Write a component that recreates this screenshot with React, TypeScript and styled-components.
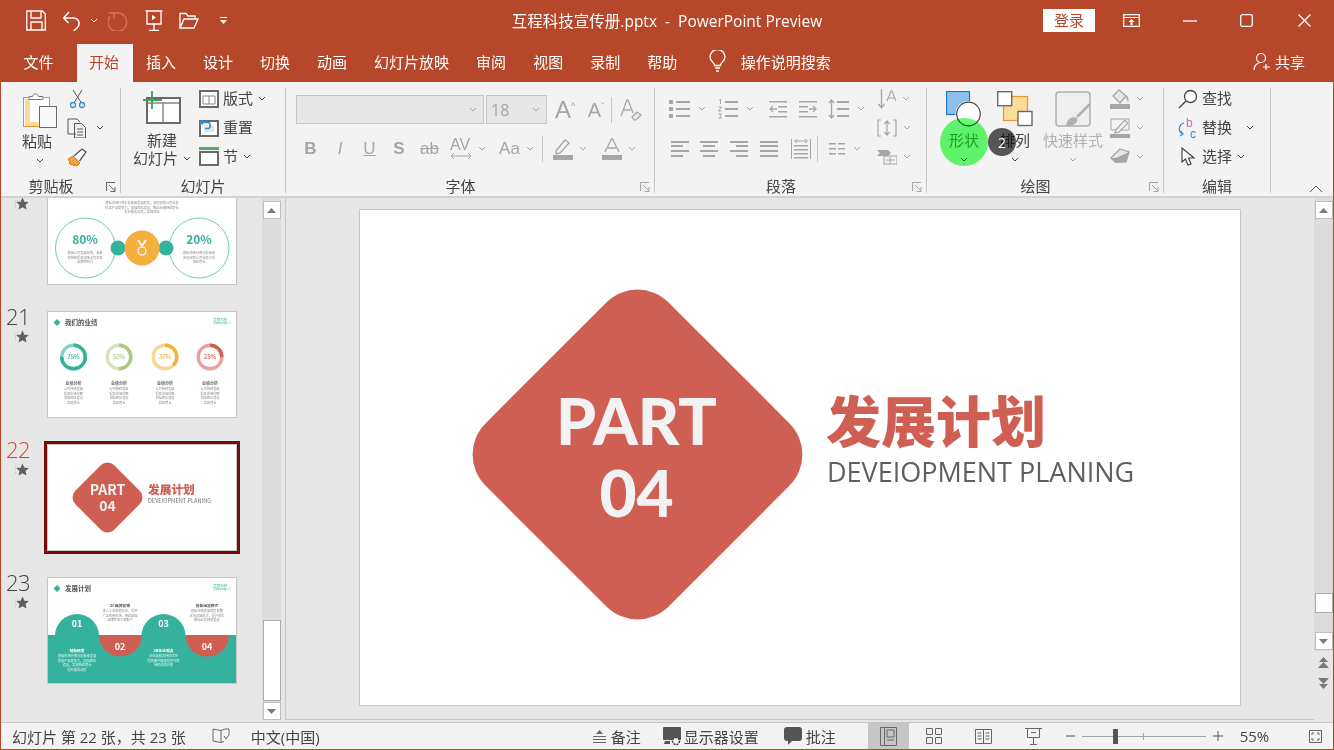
import React from 'react';
import styled, { createGlobalStyle } from 'styled-components';

const RED = '#b7472a';
const OFF = '#a6a6a6';
const INK = '#444444';
const FONT = '"Open Sans", "Noto Sans CJK SC", sans-serif';

const Global = createGlobalStyle`
  html, body { margin: 0; padding: 0; background: #e6e6e6; }
  * { box-sizing: border-box; }
  body { font-family: ${FONT}; }
`;

const Window = styled.div`
  position: relative;
  width: 1334px;
  height: 750px;
  overflow: hidden;
  display: flex;
  flex-direction: column;
  border: 1px solid ${RED};
  border-top: none;
  background: #e6e6e6;
`;

/* title bar */
const TitleBar = styled.header`
  height: 43px;
  flex: none;
  display: grid;
  grid-template-columns: 1fr auto 1fr;
  align-items: center;
  padding-bottom: 2px;
  background: ${RED};
  color: #fff;
`;
const Qat = styled.div`
  display: flex;
  align-items: center;
`;
const Slot = styled.span<{ $ml: number }>`
  display: flex;
  margin-left: ${p => p.$ml}px;
`;
const Title = styled.div`
  font-size: 15.5px;
  white-space: pre;
`;
const WinControls = styled.div`
  display: flex;
  align-items: center;
  justify-content: flex-end;
`;
const Login = styled.button`
  width: 52px;
  height: 23px;
  margin-right: 27px;
  padding: 0 0 3px;
  border: none;
  background: #fff;
  color: ${RED};
  font: 15px ${FONT};
`;
const WinBtn = styled.span<{ $w: number }>`
  display: flex;
  justify-content: center;
  width: ${p => p.$w}px;
`;

/* tabs */
const TabBar = styled.nav`
  height: 39px;
  flex: none;
  display: flex;
  align-items: stretch;
  background: ${RED};
  color: #fff;
  font-size: 15px;
`;
const Tab = styled.span<{ $active?: boolean; $first?: boolean }>`
  display: flex;
  align-items: center;
  padding: 0 13.5px 3px ${p => (p.$active ? 12.5 : 13.5)}px;
  margin-top: 1px;
  margin-left: ${p => (p.$first ? 9 : 0)}px;
  margin-right: ${p => (p.$first ? 9.5 : 0)}px;
  background: ${p => (p.$active ? '#f3f3f3' : 'transparent')};
  color: ${p => (p.$active ? RED : '#fff')};
`;
const Search = styled.span`
  display: flex;
  align-items: center;
  gap: 15px;
  margin-left: 18px;
  padding-bottom: 3px;
`;
const Share = styled.span`
  display: flex;
  align-items: center;
  gap: 4px;
  margin-left: auto;
  margin-right: 28px;
  padding-bottom: 3px;
`;

/* ribbon */
const Ribbon = styled.section`
  position: relative;
  height: 116px;
  flex: none;
  display: flex;
  padding-top: 3px;
  background: #f3f3f3;
  border-bottom: 2px solid #d2d2d2;
  color: ${INK};
  font-size: 15px;
`;
const Group = styled.div<{ $w: number }>`
  width: ${p => p.$w}px;
  flex: none;
  display: flex;
  flex-direction: column;
`;
const Body = styled.div<{ $pl?: number }>`
  height: 92px;
  display: flex;
  padding-left: ${p => p.$pl ?? 0}px;
`;
const GroupLabel = styled.div`
  height: 19px;
  display: flex;
  align-items: center;
  line-height: 19px;
`;
const GroupName = styled.span`
  flex: 1;
  text-align: center;
  white-space: nowrap;
`;
const Launcher = styled.span`
  width: 19px;
  flex: none;
  display: flex;
  justify-content: flex-end;
  padding-right: 4px;
`;
const Sep = styled.div`
  width: 1px;
  height: 105px;
  flex: none;
  margin-top: 3px;
  background: #c6c6c6;
`;
const Big = styled.div<{ $w: number; $off?: boolean }>`
  width: ${p => p.$w}px;
  flex: none;
  display: flex;
  flex-direction: column;
  align-items: center;
  padding-top: 6px;
  color: ${p => (p.$off ? '#b0b0b0' : INK)};
  line-height: 18px;
`;
const BigText = styled.span`
  margin-top: 4px;
  white-space: nowrap;
`;
const PasteText = styled(BigText)`
  margin-left: -6px;
`;
const ShapeText = styled(BigText)`
  color: #3f9f4c;
`;
const BigLine = styled.span`
  display: flex;
  align-items: center;
  gap: 5px;
  white-space: nowrap;
`;
const ChevWrap = styled.span`
  display: flex;
  margin-top: 8px;
`;
const Col = styled.div<{ $ml?: number }>`
  display: flex;
  flex-direction: column;
  margin-top: -1px;
  margin-left: ${p => p.$ml ?? 0}px;
`;
const Small = styled.div`
  height: 29px;
  display: flex;
  align-items: center;
  white-space: nowrap;
`;
const SmallIcon = styled.span`
  width: 20px;
  display: flex;
  justify-content: center;
  margin-right: 4px;
  flex: none;
`;
const SmallText = styled.span`
  margin-bottom: 3px;
`;
const SmallChev = styled.span<{ $ml: number }>`
  display: flex;
  margin-left: ${p => p.$ml}px;
`;
const ToolRows = styled.div<{ $pt: number; $gap: number }>`
  display: flex;
  flex-direction: column;
  padding-top: ${p => p.$pt}px;
  gap: ${p => p.$gap}px;
`;
const ToolRow = styled.div`
  height: 29px;
  display: flex;
  align-items: center;
`;
const Tool = styled.span<{ $w: number; $gap?: number }>`
  width: ${p => p.$w}px;
  flex: none;
  display: flex;
  align-items: center;
  justify-content: center;
  gap: ${p => p.$gap ?? 6}px;
`;
const Glyph = styled.span<{ $size?: number; $weight?: number; $italic?: boolean; $under?: boolean; $strike?: boolean }>`
  color: ${OFF};
  font-family: "Liberation Sans", sans-serif;
  font-size: ${p => p.$size ?? 17}px;
  font-weight: ${p => p.$weight ?? 400};
  font-style: ${p => (p.$italic ? 'italic' : 'normal')};
  text-decoration: ${p => (p.$under ? 'underline' : p.$strike ? 'line-through' : 'none')};
  line-height: 20px;
`;
const GlyphRaised = styled(Glyph)`
  display: inline-flex;
`;
const Mini = styled.i`
  font-style: normal;
  font-size: 9px;
  line-height: 12px;
`;
const Select = styled.span<{ $w: number }>`
  width: ${p => p.$w}px;
  height: 29px;
  flex: none;
  display: flex;
  align-items: center;
  justify-content: space-between;
  margin-right: 2px;
  padding: 0 6px 0 4px;
  border: 1px solid #c6c6c6;
  background: #e6e6e6;
  color: ${OFF};
  font-size: 16px;
`;
const VRule = styled.span<{ $h?: number }>`
  width: 1px;
  height: ${p => p.$h ?? 26}px;
  flex: none;
  background: #c6c6c6;
`;
const Collapse = styled.span`
  position: absolute;
  right: 10px;
  bottom: 3px;
  display: flex;
`;
const TouchMark = styled.span`
  position: absolute;
  left: 939px;
  top: 36px;
  width: 48px;
  height: 48px;
  border-radius: 50%;
  background: #62ff70;
  mix-blend-mode: multiply;
`;
const TouchBadge = styled.span`
  position: absolute;
  left: 987px;
  top: 46px;
  width: 28px;
  height: 28px;
  border-radius: 50%;
  background: #5a5a5a;
  mix-blend-mode: multiply;
`;
const TouchCount = styled.span`
  position: absolute;
  left: 987px;
  top: 46px;
  width: 28px;
  height: 28px;
  display: flex;
  align-items: center;
  justify-content: center;
  color: #fff;
  font-size: 14px;
`;

/* workspace */
const Workspace = styled.main`
  flex: 1;
  min-height: 0;
  display: flex;
  background: #e6e6e6;
`;
const ThumbPane = styled.aside`
  width: 261px;
  flex: none;
  overflow: hidden;
`;
const ThumbList = styled.div`
  margin-top: -20px;
`;
const ThumbRow = styled.div`
  height: 133px;
  display: flex;
`;
const ThumbMeta = styled.div<{ $active?: boolean }>`
  width: 46px;
  flex: none;
  display: flex;
  flex-direction: column;
  padding-left: 5px;
  margin-top: -10px;
  color: ${p => (p.$active ? '#d24726' : INK)};
  font-size: 22px;
  line-height: 30px;
  letter-spacing: -0.5px;
  font-family: "Open Sans", sans-serif;
  font-weight: 300;
`;
const StarMark = styled.span`
  display: flex;
  margin-left: 9px;
  margin-top: -1px;
`;
const Thumb = styled.div<{ $active?: boolean }>`
  width: 190px;
  height: 107px;
  flex: none;
  background: #fff;
  border: 1px solid #c6c6c6;
  box-shadow: ${p => (p.$active ? '0 0 0 3px #750b0b' : 'none')};
  overflow: hidden;
`;
const ThumbSvg = styled.svg`
  display: block;
  fill: none;
  font-family: "Noto Sans CJK SC", sans-serif;
`;
const ScrollBar = styled.div<{ $end?: boolean }>`
  width: 19px;
  flex: none;
  height: ${p => (p.$end ? '453px' : '522px')};
  display: flex;
  flex-direction: column;
  align-items: center;
  padding-top: 3px;
  background: #dcdcdc;
`;
const ArrowBtn = styled.span`
  width: 18px;
  height: 18px;
  flex: none;
  display: flex;
  align-items: center;
  justify-content: center;
  background: #fff;
  border: 1px solid #bdbdbd;
`;
const ScrollThumb = styled.span<{ $h: number; $mt: number; $mb: number }>`
  width: 18px;
  height: ${p => p.$h}px;
  flex: none;
  margin-top: ${p => p.$mt}px;
  margin-bottom: ${p => p.$mb}px;
  background: #fff;
  border: 1px solid #ababab;
`;
const Gutter = styled.div`
  width: 4px;
  flex: none;
`;
const Editor = styled.div`
  flex: 1;
  min-width: 0;
  display: flex;
  height: 522px;
  border-left: 1px solid #c6c6c6;
  border-bottom: 1px solid #c6c6c6;
  padding: 11px 0 0 73px;
`;
const Slide = styled.div`
  position: relative;
  width: 882px;
  height: 497px;
  background: #fff;
  border: 1px solid #c6c6c6;
`;
const Diamond = styled.div`
  position: absolute;
  left: 148px;
  top: 115px;
  width: 259px;
  height: 259px;
  background: #cf5f53;
  border-radius: 44px;
  transform: rotate(45deg);
`;
const DiamondText = styled.div`
  position: absolute;
  left: 147px;
  top: 117px;
  width: 259px;
  height: 259px;
  display: flex;
  flex-direction: column;
  align-items: center;
  justify-content: center;
  color: #f2f2f2;
  font-family: Lato, sans-serif;
  font-weight: 900;
  font-size: 64px;
  line-height: 72px;
`;
const Heading = styled.div`
  position: absolute;
  left: 466px;
  top: 169px;
  color: #cf5f53;
  font-family: "Noto Sans CJK SC", sans-serif;
  font-weight: 900;
  font-size: 55px;
  line-height: 78px;
  white-space: nowrap;
`;
const SubHeading = styled.div`
  position: absolute;
  left: 467px;
  top: 243px;
  color: #5f5f5f;
  font-size: 27px;
  line-height: 38px;
  white-space: nowrap;
`;
const SideRail = styled.div`
  width: 19px;
  flex: none;
  display: flex;
  flex-direction: column;
  align-items: center;
`;
const PageJump = styled.span<{ $mt: number }>`
  display: flex;
  margin-top: ${p => p.$mt}px;
`;

/* status bar */
const StatusBar = styled.footer`
  height: 27px;
  flex: none;
  display: flex;
  align-items: center;
  background: #f3f3f3;
  border-top: 1px solid #c6c6c6;
  color: ${INK};
  font-size: 15px;
  white-space: pre;
`;
const StatusItem = styled.span<{ $ml: number }>`
  display: flex;
  align-items: center;
  gap: 4px;
  margin-left: ${p => p.$ml}px;
`;
const SettingsText = styled.span`
  margin-left: -3px;
`;
const ViewBtn = styled.span<{ $active?: boolean; $w: number }>`
  width: ${p => p.$w}px;
  height: 26px;
  flex: none;
  display: flex;
  align-items: center;
  justify-content: center;
  background: ${p => (p.$active ? '#c6c6c6' : 'transparent')};
`;
const ZoomTrack = styled.span`
  position: relative;
  width: 124px;
  height: 1px;
  margin: 0 7px;
  background: #a6a6a6;
`;
const ZoomKnob = styled.span`
  position: absolute;
  left: 31px;
  top: -7px;
  width: 5px;
  height: 15px;
  background: #555;
`;
const ZoomTick = styled.span`
  position: absolute;
  left: 61px;
  top: -3px;
  width: 1px;
  height: 7px;
  background: #a6a6a6;
`;

const Ico = ({ w, h, children }: { w: number; h: number; children: React.ReactNode }) => (
  <svg width={w} height={h} viewBox={`0 0 ${w} ${h}`} fill='none' style={{ display: 'block' }}>{children}</svg>
);

const Chev = ({ off }: { off?: boolean }) => (
  <Ico w={8} h={5}><path d='M1 1l3 3 3-3' stroke={off ? OFF : INK} /></Ico>
);

const LaunchIcon = ({ off }: { off?: boolean }) => {
  const c = off ? OFF : '#666';
  return (
    <Ico w={10} h={10}>
      <path d='M.5 9V.5H9M3 3l5.5 5.5M9 5v4.5H4.5' stroke={c} />
    </Ico>
  );
};

const Bars = ({ w, ys, xs, ws, t = 2 }: { w: number; ys: number[]; xs?: number[]; ws?: number[]; t?: number }) => (
  <>
    {ys.map((y, i) => (
      <rect key={y} x={xs ? xs[i] : 0} y={y} width={ws ? ws[i] : w} height={t} fill={OFF} />
    ))}
  </>
);

const Bullets = () => (
  <Ico w={21} h={20}>
    <rect y='1' width='4' height='4' fill={OFF} /><rect y='8' width='4' height='4' fill={OFF} /><rect y='15' width='4' height='4' fill={OFF} />
    <Bars w={14} xs={[7, 7, 7]} ys={[2, 9, 16]} ws={[14, 14, 14]} />
  </Ico>
);
const Numbered = () => (
  <Ico w={20} h={20}>
    <path d='M1 1l1.5-1v5M.5 8h3l-3 4h3M.5 15h3l-1.5 2 1.5 2h-3' stroke={OFF} />
    <Bars w={13} xs={[7, 7, 7]} ys={[2, 9, 16]} ws={[13, 13, 13]} />
  </Ico>
);
const Indent = ({ flip }: { flip?: boolean }) => (
  <Ico w={18} h={18}>
    <g transform={flip ? 'matrix(-1 0 0 1 18 0)' : undefined}>
      <Bars w={18} ys={[1, 16]} t={1.5} />
      <rect x='9' y='6' width='9' height='1.5' fill={OFF} /><rect x='9' y='11' width='9' height='1.5' fill={OFF} />
      <path d='M8 9H1M4 6L1 9l3 3' stroke={OFF} strokeWidth='1.3' />
    </g>
  </Ico>
);
const LineSpacing = () => (
  <Ico w={21} h={20}>
    <path d='M3.5 1v18M1 4l2.5-3L6 4M1 16l2.5 3L6 16' stroke={OFF} strokeWidth='1.3' />
    <Bars w={12} xs={[9, 9, 9]} ys={[2, 9, 16]} ws={[12, 12, 12]} />
  </Ico>
);
const AlignIcon = ({ xs, ws }: { xs: number[]; ws: number[] }) => (
  <Ico w={18} h={17}><Bars w={18} ys={[1, 5, 10, 15]} xs={xs} ws={ws} /></Ico>
);

const Star = () => (
  <Ico w={14} h={13}>
    <path d='M7.5.5l1.9 4.2 4.4.4-3.3 3 1 4.5-4-2.4-4 2.4 1-4.5-3.3-3 4.4-.4z' fill='#5f5f5f' />
    <path d='M0 4h3M0 7h2M0 10h2' stroke='#b5b5b5' strokeDasharray='1 1' />
  </Ico>
);

const Up = () => <Ico w={9} h={5}><path d='M4.5 0L9 5H0z' fill='#7a7a7a' /></Ico>;
const Down = () => <Ico w={9} h={5}><path d='M0 0h9L4.5 5z' fill='#7a7a7a' /></Ico>;

const T = ({ x, y, s = 3.2, c = '#8a8a8a', w = 400, a = 'start', children }: {
  x: number; y: number; s?: number; c?: string; w?: number; a?: 'start' | 'middle'; children: React.ReactNode;
}) => <text x={x} y={y} fontSize={s} fill={c} fontWeight={w} textAnchor={a}>{children}</text>;

const Donut = ({ x, c, light, pct, label }: { x: number; c: string; light: string; pct: number; label: string }) => {
  const r = 11.8;
  const len = 2 * Math.PI * r;
  return (
    <g>
      <circle cx={x} cy='45' r={r} stroke={light} strokeWidth='3.4' />
      <circle cx={x} cy='45' r={r} stroke={c} strokeWidth='3.4' strokeDasharray={`${(len * pct) / 100} ${len}`} transform={`rotate(-90 ${x} 45)`} />
      <T x={x} y={47} s={6} c={c} w={500} a='middle'>{label}</T>
    </g>
  );
};

const Thumb20 = () => (
  <ThumbSvg width='188' height='105' viewBox='0 0 188 105'>
    <T x={94} y={25} a='middle'>根据市场行情分析未来发展趋势，合理规划公司业务</T>
    <T x={94} y={29.5} a='middle'>提高产品竞争力，加强团队建设，推动业绩持续增长</T>
    <T x={94} y={34} a='middle'>提升服务品质，实现目标</T>
    <circle cx='37.5' cy='69' r='30' stroke='#35b29c' strokeWidth='.7' />
    <circle cx='151' cy='69' r='30' stroke='#35b29c' strokeWidth='.7' />
    <circle cx='70' cy='69' r='7.5' fill='#35b29c' />
    <circle cx='118' cy='69' r='7.5' fill='#35b29c' />
    <circle cx='94' cy='69' r='17.5' fill='#f4b03e' />
    <circle cx='94' cy='72' r='4' stroke='#fff' strokeWidth='1.2' />
    <path d='M90 61l4 6 4-6' stroke='#fff' strokeWidth='1.6' />
    <T x={37} y={65} s={12} c='#35b29c' w={700} a='middle'>80%</T>
    <T x={151} y={65} s={12} c='#35b29c' w={700} a='middle'>20%</T>
    <T x={37} y={75} a='middle'>根据公司发展规划，未来</T>
    <T x={37} y={79.5} a='middle'>将持续提高市场占有率和</T>
    <T x={37} y={84} a='middle'>品牌影响力</T>
    <T x={151} y={75} a='middle'>根据市场行情分析未来</T>
    <T x={151} y={79.5} a='middle'>合理规划公司业务方向</T>
    <T x={151} y={84} a='middle'>持续增长</T>
  </ThumbSvg>
);

const Thumb21 = () => (
  <ThumbSvg width='188' height='105' viewBox='0 0 188 105'>
    <path d='M9 7l3.5 3.5L9 14l-3.5-3.5z' fill='#35b29c' />
    <T x={17} y={13} s={6.5} c='#555' w={700}>我们的业绩</T>
    <T x={165} y={9} s={3.6} c='#35b29c'>互程科技</T>
    <T x={165} y={12} s={2.2} c='#35b29c'>互程科技有限公司</T>
    {[
      { x: 25.5, c: '#35b29c', light: '#82d6c8', pct: 75, label: '75%' },
      { x: 71, c: '#b0c97f', light: '#d7e3c0', pct: 50, label: '50%' },
      { x: 117, c: '#f4b03e', light: '#fbd592', pct: 37, label: '37%' },
      { x: 162, c: '#cf5f53', light: '#e6a29b', pct: 25, label: '25%' }
    ].map(d => (
      <g key={d.label}>
        <Donut {...d} />
        <T x={d.x} y={73} s={4} c='#666' w={700} a='middle'>业绩分析</T>
        <T x={d.x} y={78} a='middle'>公司持续发展</T>
        <T x={d.x} y={82.5} a='middle'>提高市场份额</T>
        <T x={d.x} y={87} a='middle'>加强团队建设</T>
        <T x={d.x} y={91.5} a='middle'>实现增长</T>
      </g>
    ))}
  </ThumbSvg>
);

const Thumb22 = () => (
  <ThumbSvg width='188' height='106' viewBox='0 0 188 106'>
    <rect x='32' y='25' width='55' height='55' rx='9.5' fill='#cf5f53' transform='rotate(45 59.5 52.5)' />
    <T x={59.5} y={50} s={14} c='#f2f2f2' w={700} a='middle'>PART</T>
    <T x={59.5} y={66} s={14} c='#f2f2f2' w={700} a='middle'>04</T>
    <T x={100} y={49} s={11.7} c='#cf5f53' w={900}>发展计划</T>
    <T x={100} y={58} s={5.6} c='#777'>DEVEIOPMENT PLANING</T>
  </ThumbSvg>
);

const Thumb23 = () => (
  <ThumbSvg width='188' height='105' viewBox='0 0 188 105'>
    <rect x='0' y='57' width='188' height='48' fill='#35b29c' />
    <circle cx='29' cy='58' r='22' fill='#35b29c' />
    <circle cx='115.5' cy='58' r='22' fill='#35b29c' />
    <path d='M51 57h43a21.5 21.5 0 0 1-43 0zM137.5 57H181a21.75 21.75 0 0 1-43.5 0z' fill='#cf5f53' />
    <path d='M6 11l3.5 3.5L6 18l-3.5-3.5z' transform='translate(3 -4)' fill='#35b29c' />
    <T x={17} y={12.5} s={6.5} c='#555' w={700}>发展计划</T>
    <T x={165} y={9} s={3.6} c='#35b29c'>互程科技</T>
    <T x={165} y={12} s={2.2} c='#35b29c'>互程科技有限公司</T>
    <T x={29} y={49} s={9} c='#fff' w={700} a='middle'>01</T>
    <T x={72} y={72} s={9} c='#fff' w={700} a='middle'>02</T>
    <T x={115.5} y={49} s={9} c='#fff' w={700} a='middle'>03</T>
    <T x={159} y={72} s={9} c='#fff' w={700} a='middle'>04</T>
    <T x={72} y={29} s={3.8} c='#555' w={700} a='middle'>2C品牌营销</T>
    <T x={72} y={34} a='middle'>进入工业制造行业，提供</T>
    <T x={72} y={38.5} a='middle'>广泛应用市场，持续拓展</T>
    <T x={72} y={43} a='middle'>品牌影响力和客户</T>
    <T x={159} y={29} s={3.8} c='#555' w={700} a='middle'>创新运营模式</T>
    <T x={159} y={34} a='middle'>根据市场发展趋势调整</T>
    <T x={159} y={38.5} a='middle'>优化运营模式，提升效率</T>
    <T x={159} y={43} a='middle'>推动业务持续发展</T>
    <T x={29} y={74} s={3.8} c='#fff' w={700} a='middle'>创新研发</T>
    <T x={29} y={79} c='#e4f5f1' a='middle'>根据市场行情分析未来发展</T>
    <T x={29} y={83.5} c='#e4f5f1' a='middle'>提高产品竞争力，加强团队</T>
    <T x={29} y={88} c='#e4f5f1' a='middle'>建设，实现持续增长</T>
    <T x={29} y={92.5} c='#e4f5f1' a='middle'>提升服务品质</T>
    <T x={115.5} y={74} s={3.8} c='#fff' w={700} a='middle'>2B企业服务</T>
    <T x={115.5} y={79} c='#e4f5f1' a='middle'>企业级服务持续优化</T>
    <T x={115.5} y={83.5} c='#e4f5f1' a='middle'>围绕客户需求提供方案</T>
    <T x={115.5} y={88} c='#e4f5f1' a='middle'>持续创造价值</T>
  </ThumbSvg>
);

const slides = [
  { n: '20', art: <Thumb20 /> },
  { n: '21', art: <Thumb21 /> },
  { n: '22', art: <Thumb22 />, active: true },
  { n: '23', art: <Thumb23 /> }
];

const tabs = ['插入', '设计', '切换', '动画', '幻灯片放映', '审阅', '视图', '录制', '帮助'];

export default function App (): React.ReactElement {
  return (
    <Window>
      <Global />
      <TitleBar>
        <Qat>
          <Slot $ml={25}>
            <Ico w={20} h={21}><path d='M.8 1h15.5l3 3v16H.8zM5 1v7h10V1M5 20v-8h11v8' stroke='#fff' strokeWidth='1.3' /></Ico>
          </Slot>
          <Slot $ml={16}>
            <Ico w={19} h={21}><path d='M1.5 8H11c6 0 8 6 4 10l-3.5 3M1.5 8L7 2M1.5 8L6.5 13' stroke='#fff' strokeWidth='1.5' /></Ico>
          </Slot>
          <Slot $ml={9}><Ico w={8} h={5}><path d='M1 1l3 3 3-3' stroke='#fff' /></Ico></Slot>
          <Slot $ml={10}>
            <Ico w={21} h={21}><path d='M6 3.5a9.3 9.3 0 1 1-4 3M6 8.5V3H.5' stroke='#d9705a' strokeWidth='1.4' /></Ico>
          </Slot>
          <Slot $ml={16}>
            <Ico w={18} h={21}><path d='M.5 1h17M2 1v13h14V1M9 14v6M4 20.3h10' stroke='#fff' strokeWidth='1.3' /><path d='M7 5l4 2.5L7 10z' fill='#fff' /></Ico>
          </Slot>
          <Slot $ml={16}>
            <Ico w={20} h={17}><path d='M1 16V1.5h6l2 2.5h7v3M1 16l4-9h14l-4 9z' stroke='#fff' strokeWidth='1.3' /></Ico>
          </Slot>
          <Slot $ml={21}>
            <Ico w={7} h={7}><path d='M0 .5h7' stroke='#fff' /><path d='M0 3h7L3.5 7z' fill='#fff' /></Ico>
          </Slot>
        </Qat>
        <Title>互程科技宣传册.pptx  -  PowerPoint Preview</Title>
        <WinControls>
          <Login>登录</Login>
          <WinBtn $w={18}>
            <Ico w={17} h={13}><path d='M.7.7h15.6v11.6H.7zM.7 3.5h15.6' stroke='#fff' strokeWidth='1.2' /><path d='M8.5 5L5.5 8h2v3h2V8h2z' fill='#fff' /></Ico>
          </WinBtn>
          <WinBtn $w={42} />
          <WinBtn $w={15}><Ico w={14} h={2}><path d='M0 1h14' stroke='#fff' strokeWidth='1.3' /></Ico></WinBtn>
          <WinBtn $w={43} />
          <WinBtn $w={13}>
            <Ico w={13} h={13}><rect x='.7' y='.7' width='11.6' height='11.6' rx='1.5' stroke='#fff' strokeWidth='1.3' /></Ico>
          </WinBtn>
          <WinBtn $w={45} />
          <WinBtn $w={13}><Ico w={13} h={13}><path d='M.5.5l12 12M12.5.5l-12 12' stroke='#fff' strokeWidth='1.3' /></Ico></WinBtn>
          <WinBtn $w={22} />
        </WinControls>
      </TitleBar>

      <TabBar>
        <Tab $first>文件</Tab>
        <Tab $active>开始</Tab>
        {tabs.map(t => <Tab key={t}>{t}</Tab>)}
        <Search>
          <Ico w={17} h={22}><path d='M5.5 15.5c0-3-4.5-4.5-4.5-8.5a7.5 7.5 0 0 1 15 0c0 4-4.5 5.5-4.5 8.5zM6 18h5M7 21h3' stroke='#fff' strokeWidth='1.3' /></Ico>
          操作说明搜索
        </Search>
        <Share>
          <Ico w={18} h={19}><circle cx='8' cy='6' r='4.5' stroke='#fff' strokeWidth='1.2' /><path d='M1 18c0-4 3-7 6-7.5M13 12v6M10 15h7' stroke='#fff' strokeWidth='1.2' /></Ico>
          共享
        </Share>
      </TabBar>

      <Ribbon>
        <Group $w={119}>
          <Body $pl={22}>
            <Big $w={34}>
              <Ico w={34} h={37}>
                <rect x='.5' y='6.5' width='26' height='29' fill='#fff' stroke='#e8912d' />
                <rect x='2' y='8' width='5' height='27' fill='#fbd99f' />
                <rect x='2' y='31' width='24' height='4' fill='#fbd99f' />
                <path d='M6 7.5V5.5h3.5C10 2 15 2 15.5 5.5H20v3H6z' fill='#fff' stroke='#777' />
                <rect x='16.5' y='15.5' width='17' height='21' fill='#f8f8f8' stroke='#6a6a6a' />
              </Ico>
              <PasteText>粘贴</PasteText>
              <ChevWrap><Chev /></ChevWrap>
            </Big>
            <Col $ml={10}>
              <Small>
                <Ico w={22} h={20}>
                  <path d='M6 1l8.5 13M15 1L7 14' stroke='#555' />
                  <circle cx='6' cy='16' r='2.5' stroke='#2f8fd8' strokeWidth='1.3' />
                  <circle cx='15' cy='16' r='2.5' stroke='#2f8fd8' strokeWidth='1.3' />
                </Ico>
              </Small>
              <Small>
                <Ico w={21} h={20}><path d='M9 16H1V1h9l3 3M7.5 5.5h7l4 4V20h-11zM10 11h6M10 14h6M10 17h6' stroke='#555' /></Ico>
                <SmallChev $ml={8}><Chev /></SmallChev>
              </Small>
              <Small>
                <Ico w={22} h={20}>
                  <path d='M1 12l5-3 7 7-3 3-2-1-1 1-2-2-1 1-2-2 1-1z' fill='#f1a33b' stroke='#d97a12' />
                  <path d='M7 9l8-7 4 3-6.5 9' fill='#fff' stroke='#555' strokeWidth='1.3' />
                </Ico>
              </Small>
            </Col>
          </Body>
          <GroupLabel><GroupName>剪贴板</GroupName><Launcher><LaunchIcon /></Launcher></GroupLabel>
        </Group>
        <Sep />
        <Group $w={164}>
          <Body $pl={12}>
            <Big $w={58}>
              <Ico w={38} h={36}>
                <path d='M4 7h33v25H4z' fill='#fff' stroke='#6a6a6a' strokeWidth='2' />
                <path d='M5 12h31M20 12v19' stroke='#888' strokeWidth='1.5' />
                <path d='M9 0v18M0 9h19' stroke='#3aa655' strokeWidth='1.8' />
              </Ico>
              <BigText>新建</BigText>
              <BigLine>幻灯片<Chev /></BigLine>
            </Big>
            <Col $ml={8}>
              <Small>
                <SmallIcon><Ico w={20} h={18}><rect x='1' y='1' width='18' height='16' fill='#fff' stroke='#6a6a6a' strokeWidth='2' /><path d='M4 6h12M10 6v8M4 6v8h12V6' stroke='#888' /></Ico></SmallIcon>
                <SmallText>版式</SmallText><SmallChev $ml={5}><Chev /></SmallChev>
              </Small>
              <Small>
                <SmallIcon>
                  <Ico w={20} h={18}>
                    <rect x='1' y='2' width='18' height='15' fill='#fff' stroke='#6a6a6a' strokeWidth='2' />
                    <rect x='5' y='6' width='10' height='7' fill='#e4e4e4' />
                    <path d='M4 5.5L1.5 3.5 4 1M2 3.5h7c3 0 3 6 0 6H6' stroke='#2f8fd8' strokeWidth='1.5' />
                  </Ico>
                </SmallIcon>
                <SmallText>重置</SmallText>
              </Small>
              <Small>
                <SmallIcon>
                  <Ico w={20} h={19}>
                    <rect x='0' y='0' width='20' height='3' fill='#56a868' />
                    <rect x='1' y='5' width='18' height='13' fill='#fff' stroke='#6a6a6a' strokeWidth='2' />
                  </Ico>
                </SmallIcon>
                <SmallText>节</SmallText><SmallChev $ml={5}><Chev /></SmallChev>
              </Small>
            </Col>
          </Body>
          <GroupLabel><GroupName>幻灯片</GroupName></GroupLabel>
        </Group>
        <Sep />
        <Group $w={368}>
          <Body $pl={10}>
            <ToolRows $pt={10} $gap={10}>
              <ToolRow>
                <Select $w={188}><span /><Chev off /></Select>
                <Select $w={61}>18<Chev off /></Select>
                <Tool $w={32}>
                  <GlyphRaised $size={24}>A<Mini>^</Mini></GlyphRaised>
                </Tool>
                <Tool $w={30}><GlyphRaised $size={20}>A<Mini>ˇ</Mini></GlyphRaised></Tool>
                <VRule />
                <Tool $w={38}>
                  <Ico w={22} h={22}>
                    <path d='M1 17L7 1h1l5 13M3.5 11h7' stroke={OFF} strokeWidth='1.3' />
                    <path d='M12 18l5-5 4 3-5 5h-2z' fill='#e8e8e8' stroke={OFF} strokeWidth='1.2' />
                  </Ico>
                </Tool>
              </ToolRow>
              <ToolRow>
                <Tool $w={29}><Glyph $weight={700}>B</Glyph></Tool>
                <Tool $w={30}><Glyph $italic>I</Glyph></Tool>
                <Tool $w={29}><Glyph $under>U</Glyph></Tool>
                <Tool $w={30}><Glyph $weight={700}>S</Glyph></Tool>
                <Tool $w={31}><Glyph $strike>ab</Glyph></Tool>
                <Tool $w={46}>
                  <Ico w={22} h={22}>
                    <text x='0' y='12' fontSize='16' fill={OFF} fontFamily='Liberation Sans'>AV</text>
                    <path d='M1 18h20M4 15l-3 3 3 3M18 15l3 3-3 3' stroke={OFF} />
                  </Ico>
                  <Chev off />
                </Tool>
                <Tool $w={51}><Glyph $size={17}>Aa</Glyph><Chev off /></Tool>
                <VRule />
                <Tool $w={54}>
                  <Ico w={20} h={22}>
                    <path d='M3 13L12 2l4 3-9 10-4 1z' stroke={OFF} strokeWidth='1.3' />
                    <rect y='17' width='20' height='5' fill={OFF} />
                  </Ico>
                  <Chev off />
                </Tool>
                <Tool $w={44}>
                  <Ico w={20} h={22}>
                    <path d='M3 14L9.5 1h1L17 14M6 10h8' stroke={OFF} strokeWidth='1.3' />
                    <rect y='17' width='20' height='5' fill={OFF} />
                  </Ico>
                  <Chev off />
                </Tool>
              </ToolRow>
            </ToolRows>
          </Body>
          <GroupLabel><GroupName>字体</GroupName><Launcher><LaunchIcon off /></Launcher></GroupLabel>
        </Group>
        <Sep />
        <Group $w={271}>
          <Body $pl={11}>
            <ToolRows $pt={9} $gap={11}>
              <ToolRow>
                <Tool $w={42} $gap={8}><Bullets /><Chev off /></Tool>
                <Tool $w={7} />
                <Tool $w={42} $gap={8}><Numbered /><Chev off /></Tool>
                <Tool $w={6} />
                <Tool $w={30}><Indent /></Tool>
                <Tool $w={30}><Indent flip /></Tool>
                <Tool $w={46} $gap={8}><LineSpacing /><Chev off /></Tool>
              </ToolRow>
              <ToolRow>
                <Tool $w={28}><AlignIcon xs={[0, 0, 0, 0]} ws={[18, 12, 18, 12]} /></Tool>
                <Tool $w={30}><AlignIcon xs={[0, 3, 0, 3]} ws={[18, 12, 18, 12]} /></Tool>
                <Tool $w={30}><AlignIcon xs={[0, 6, 0, 6]} ws={[18, 12, 18, 12]} /></Tool>
                <Tool $w={30}><AlignIcon xs={[0, 0, 0, 0]} ws={[18, 18, 18, 18]} /></Tool>
                <Tool $w={33}>
                  <Ico w={20} h={20}>
                    <path d='M.5 0v20M19.5 0v20M4 2h12M6 0L3.5 2 6 4M14 0l2.5 2L14 4' stroke={OFF} />
                    <Bars w={14} xs={[3, 3, 3, 3]} ws={[14, 14, 14, 14]} ys={[6, 10, 14, 18]} t={1.5} />
                  </Ico>
                </Tool>
                <VRule />
                <Tool $w={54} $gap={8}>
                  <Ico w={16} h={12}><Bars w={7} xs={[0, 0, 0]} ws={[7, 7, 7]} ys={[0, 5, 10]} t={1.5} /><rect x='9' width='7' height='1.5' fill={OFF} /><rect x='9' y='5' width='7' height='1.5' fill={OFF} /><rect x='9' y='10' width='7' height='1.5' fill={OFF} /></Ico>
                  <Chev off />
                </Tool>
              </ToolRow>
            </ToolRows>
            <Col $ml={4}>
              <Small>
                <Tool $w={36}>
                  <Ico w={18} h={22}><path d='M3.5 1v19M.5 16l3 4 3-4' stroke={OFF} strokeWidth='1.3' /><path d='M9 13L13 3h1l4 10M10.5 10h6' stroke={OFF} strokeWidth='1.2' /></Ico>
                  <Chev off />
                </Tool>
              </Small>
              <Small>
                <Tool $w={36}>
                  <Ico w={20} h={18}><path d='M4 1H1v16h3M16 1h3v16h-3M10 2v14M7.5 5L10 2l2.5 3M7.5 13l2.5 3 2.5-3' stroke={OFF} strokeWidth='1.2' /></Ico>
                  <Chev off />
                </Tool>
              </Small>
              <Small>
                <Tool $w={36}>
                  <Ico w={20} h={16}><path d='M0 1h11l3 3-3 3H0l3-3z' fill={OFF} /><rect x='7' y='7' width='13' height='8' fill='#f3f3f3' stroke={OFF} /><path d='M9 11h9M13 8v7' stroke={OFF} /></Ico>
                  <Chev off />
                </Tool>
              </Small>
            </Col>
          </Body>
          <GroupLabel><GroupName>段落</GroupName><Launcher><LaunchIcon off /></Launcher></GroupLabel>
        </Group>
        <Sep />
        <Group $w={236}>
          <Body $pl={12}>
            <Big $w={50}>
              <Ico w={36} h={36}>
                <rect x='.5' y='.5' width='23' height='23' fill='#8ac0ea' stroke='#1f74c4' strokeWidth='1.2' />
                <circle cx='22.5' cy='23' r='13' fill='#fff' />
                <circle cx='22.5' cy='23' r='11.8' fill='#fff' stroke='#444' strokeWidth='1.2' />
              </Ico>
              <ShapeText>形状</ShapeText>
              <ChevWrap><Chev /></ChevWrap>
            </Big>
            <Big $w={52}>
              <Ico w={36} h={36}>
                <rect x='6.5' y='5.5' width='24' height='24' fill='#fbdc98' stroke='#ed9330' strokeWidth='1.2' />
                <rect x='.7' y='.7' width='14' height='14' fill='#fff' stroke='#6a6a6a' strokeWidth='1.4' />
                <rect x='21' y='20.5' width='14' height='14' fill='#fff' stroke='#6a6a6a' strokeWidth='1.4' />
              </Ico>
              <BigText>排列</BigText>
              <ChevWrap><Chev /></ChevWrap>
            </Big>
            <Big $w={64} $off>
              <Ico w={36} h={36}>
                <rect x='1' y='1' width='34' height='34' rx='3' fill='#eeeeee' stroke='#b0b0b0' strokeWidth='1.5' />
                <path d='M35 13L22 26' stroke='#b0b0b0' strokeWidth='2.5' />
                <path d='M11 35c1-8 7-10 11-8 1 4-2 8-11 8z' fill='#b0b0b0' />
              </Ico>
              <BigText>快速样式</BigText>
              <ChevWrap><Chev off /></ChevWrap>
            </Big>
            <Col $ml={1}>
              <Small>
                <Tool $w={42}>
                  <Ico w={20} h={20}><path d='M3 7l6-6 7 6-6 7z' stroke={OFF} strokeWidth='1.3' fill='#e6e6e6' /><path d='M16 6c3 2 3 6 2 7-1-1-2-5-2-7z' fill={OFF} /><rect y='15' width='20' height='5' fill={OFF} /></Ico>
                  <Chev off />
                </Tool>
              </Small>
              <Small>
                <Tool $w={42}>
                  <Ico w={20} h={20}><path d='M1 1h18v11H1z' stroke={OFF} /><path d='M6 12l9-10 3 3-9 9-4 1z' fill='#f3f3f3' stroke={OFF} strokeWidth='1.2' /><rect y='16' width='20' height='4' fill={OFF} /></Ico>
                  <Chev off />
                </Tool>
              </Small>
              <Small>
                <Tool $w={42}>
                  <Ico w={20} h={17}><path d='M1 10l9-9 9 3-3 10H5z' fill='#e6e6e6' stroke={OFF} strokeWidth='1.3' /><path d='M1 10l5 5 10-2 3-9-11 5-2 1z' fill={OFF} /></Ico>
                  <Chev off />
                </Tool>
              </Small>
            </Col>
          </Body>
          <GroupLabel><GroupName>绘图</GroupName><Launcher><LaunchIcon off /></Launcher></GroupLabel>
        </Group>
        <Sep />
        <Group $w={106}>
          <Body $pl={14}>
            <Col>
              <Small>
                <SmallIcon><Ico w={20} h={20}><circle cx='12.5' cy='7.5' r='6' fill='#fff' stroke='#444' strokeWidth='1.3' /><path d='M8 12l-7 7' stroke='#444' strokeWidth='1.5' /></Ico></SmallIcon>
                <SmallText>查找</SmallText>
              </Small>
              <Small>
                <SmallIcon>
                  <Ico w={20} h={22}>
                    <text x='8' y='10' fontSize='12' fill='#c868b8' fontFamily='Liberation Sans'>b</text>
                    <text x='12' y='21' fontSize='12' fill='#2f8fd8' fontFamily='Liberation Sans'>c</text>
                    <path d='M6 6C0 8 0 15 5 17M2.5 14l2.5 3-3 2' stroke='#2f8fd8' strokeWidth='1.3' />
                  </Ico>
                </SmallIcon>
                <SmallText>替换</SmallText><SmallChev $ml={14}><Chev /></SmallChev>
              </Small>
              <Small>
                <SmallIcon><Ico w={15} h={19}><path d='M1 1v14l3.5-3 2.5 6 3-1-2.5-6H13z' fill='#fff' stroke='#444' strokeWidth='1.2' /></Ico></SmallIcon>
                <SmallText>选择</SmallText><SmallChev $ml={5}><Chev /></SmallChev>
              </Small>
            </Col>
          </Body>
          <GroupLabel><GroupName>编辑</GroupName></GroupLabel>
        </Group>
        <Sep />
        <Collapse><Ico w={14} h={8}><path d='M1 7l6-6 6 6' stroke='#555' /></Ico></Collapse>
        <TouchMark />
        <TouchBadge />
        <TouchCount>2</TouchCount>
      </Ribbon>

      <Workspace>
        <ThumbPane>
          <ThumbList>
            {slides.map(s => (
              <ThumbRow key={s.n}>
                <ThumbMeta $active={s.active}>
                  {s.n}
                  <StarMark><Star /></StarMark>
                </ThumbMeta>
                <Thumb $active={s.active}>{s.art}</Thumb>
              </ThumbRow>
            ))}
          </ThumbList>
        </ThumbPane>
        <ScrollBar>
          <ArrowBtn><Up /></ArrowBtn>
          <ScrollThumb $h={81} $mt={401} $mb={1} />
          <ArrowBtn><Down /></ArrowBtn>
        </ScrollBar>
        <Gutter />
        <Editor>
          <Slide>
            <Diamond />
            <DiamondText><span>PART</span><span>04</span></DiamondText>
            <Heading>发展计划</Heading>
            <SubHeading>DEVEIOPMENT PLANING</SubHeading>
          </Slide>
        </Editor>
        <SideRail>
          <ScrollBar $end>
            <ArrowBtn><Up /></ArrowBtn>
            <ScrollThumb $h={20} $mt={374} $mb={19} />
            <ArrowBtn><Down /></ArrowBtn>
          </ScrollBar>
          <PageJump $mt={6}>
            <Ico w={11} h={11}><path d='M5.5 0L10 5H1zM5.5 5L11 11H0z' fill='#7a7a7a' /></Ico>
          </PageJump>
          <PageJump $mt={10}>
            <Ico w={11} h={11}><path d='M0 0h11L5.5 6zM1 6h9l-4.5 5z' fill='#7a7a7a' /></Ico>
          </PageJump>
        </SideRail>
      </Workspace>

      <StatusBar>
        <StatusItem $ml={11}>幻灯片 第 22 张，共 23 张</StatusItem>
        <StatusItem $ml={26}>
          <Ico w={18} h={16}><path d='M9 2.5L1 1v12l8 1.5M9 2.5V15M9 2.5L13 1h4v5M9 14.5l3-1M12 8l2 3 3.5-5' stroke='#666' /></Ico>
        </StatusItem>
        <StatusItem $ml={21}>中文(中国)</StatusItem>
        <StatusItem $ml={272}>
          <Ico w={15} h={13}><path d='M7.5 0L11 4H4z' fill='#666' /><path d='M1 6.5h13M1 9.5h13M1 12.5h13' stroke='#666' /></Ico>
          备注
        </StatusItem>
        <StatusItem $ml={22}>
          <Ico w={20} h={19}>
            <rect width='18' height='13' rx='1' fill='#555' />
            <path d='M2 14h5v3H1z' fill='#555' />
            <circle cx='13' cy='14' r='3.5' fill='#f3f3f3' stroke='#333' strokeWidth='1.5' strokeDasharray='2 1' />
          </Ico>
          <SettingsText>显示器设置</SettingsText>
        </StatusItem>
        <StatusItem $ml={25}>
          <Ico w={18} h={18}><path d='M3 0h12a3 3 0 0 1 3 3v8a3 3 0 0 1-3 3H8l-4 4v-4H3a3 3 0 0 1-3-3V3a3 3 0 0 1 3-3z' fill='#555' /></Ico>
          批注
        </StatusItem>
        <StatusItem $ml={32}>
          <ViewBtn $active $w={41}>
            <Ico w={17} h={19}><path d='M.5.5h16v18H.5zM4.5.5v18M7 3h7v7H7zM7 13h7' stroke='#666' /></Ico>
          </ViewBtn>
        </StatusItem>
        <ViewBtn $w={50}>
          <Ico w={16} h={16}><path d='M.5.5h6v6h-6zM9.5.5h6v6h-6zM.5 9.5h6v6h-6zM9.5 9.5h6v6h-6z' stroke='#666' /></Ico>
        </ViewBtn>
        <ViewBtn $w={50}>
          <Ico w={17} h={15}><path d='M.5.5h16v14H.5zM8.5.5v14M2.5 4h4M2.5 7h4M2.5 10h4M10.5 4h4M10.5 7h4M10.5 10h4' stroke='#666' /></Ico>
        </ViewBtn>
        <ViewBtn $w={50}>
          <Ico w={17} h={17}><path d='M0 .5h17M2.5.5v9h12v-9M8.5 9.5v7M5 16.5h7M6 4.5h5' stroke='#666' /></Ico>
        </ViewBtn>
        <StatusItem $ml={7}>
          <Ico w={9} h={2}><path d='M0 1h9' stroke='#555' /></Ico>
        </StatusItem>
        <ZoomTrack><ZoomKnob /><ZoomTick /></ZoomTrack>
        <Ico w={10} h={10}><path d='M0 5h10M5 0v10' stroke='#555' /></Ico>
        <StatusItem $ml={17}>55%</StatusItem>
        <StatusItem $ml={40}>
          <Ico w={13} h={13}><path d='M.5.5h12v12H.5zM3 5V3h2M8 3h2v2M10 8v2H8M5 10H3V8' stroke='#666' /></Ico>
        </StatusItem>
      </StatusBar>
    </Window>
  );
}
